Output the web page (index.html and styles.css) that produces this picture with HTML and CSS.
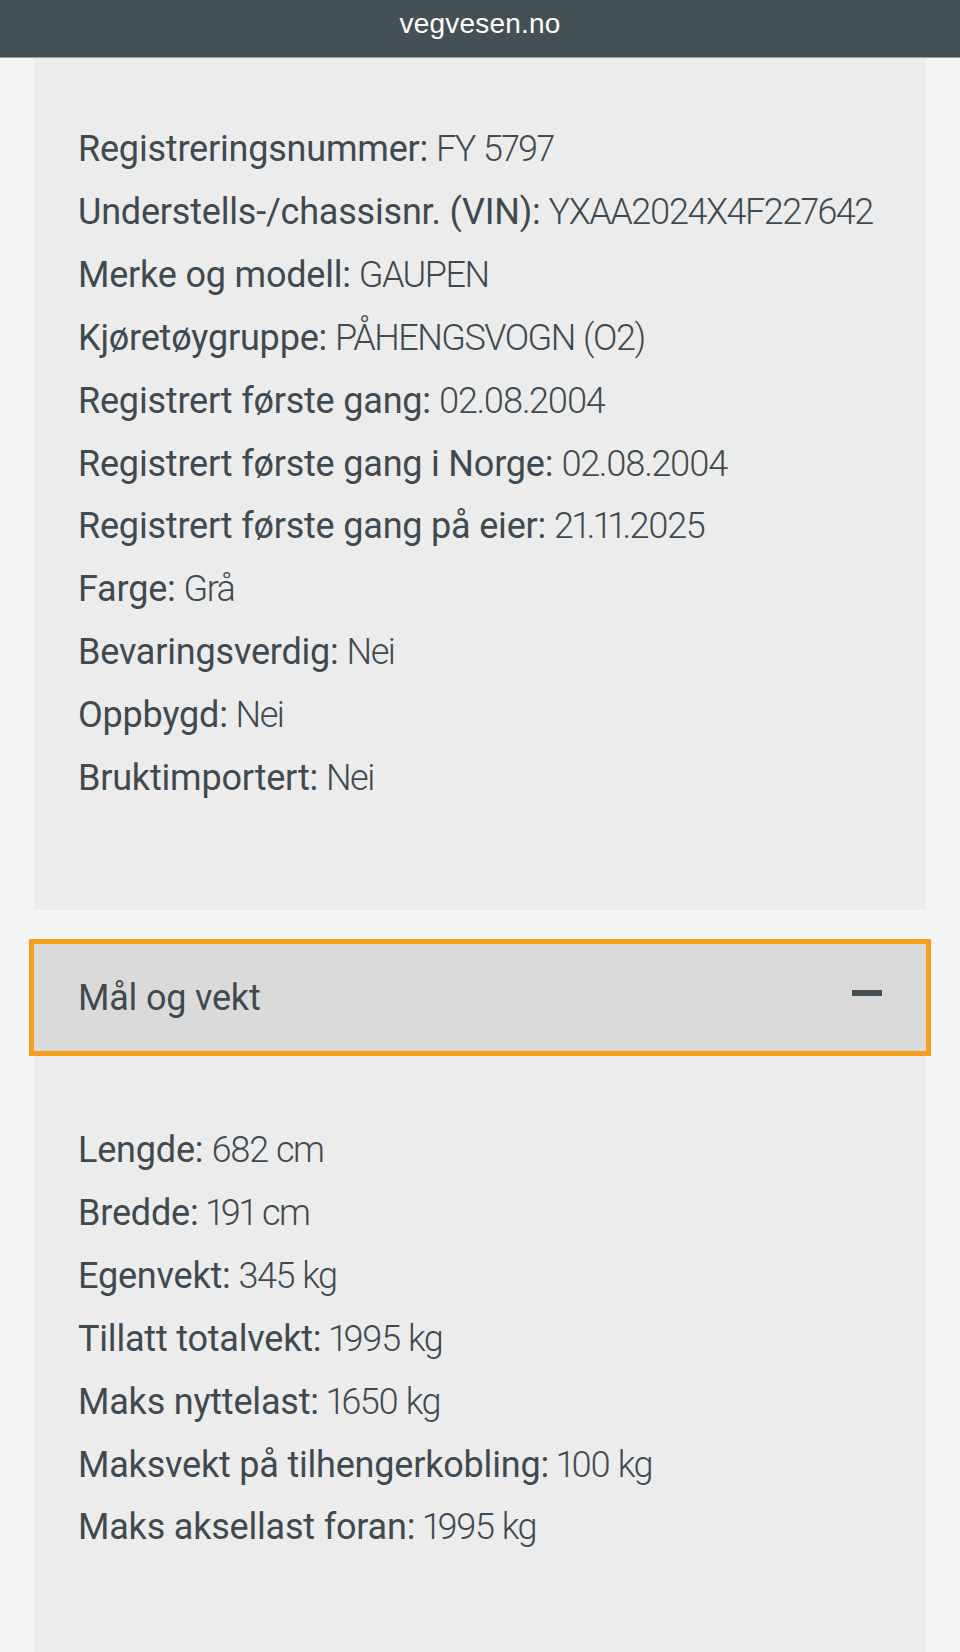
FILE: index.html
```html
<!DOCTYPE html>
<html lang="no">
<head>
<meta charset="utf-8">
<title>vegvesen.no</title>
<link rel="stylesheet" href="styles.css">
</head>
<body>
<header class="topbar"><span class="url">vegvesen.no</span></header>
<main class="content">
  <section class="card card-first">
    <div class="row"><span class="label">Registreringsnummer:</span> <span class="value">FY 5797</span></div>
    <div class="row"><span class="label">Understells-/chassisnr. (VIN):</span> <span class="value">YXAA2024X4F227642</span></div>
    <div class="row"><span class="label">Merke og modell:</span> <span class="value">GAUPEN</span></div>
    <div class="row"><span class="label">Kjøretøygruppe:</span> <span class="value">PÅHENGSVOGN (O2)</span></div>
    <div class="row"><span class="label">Registrert første gang:</span> <span class="value">02.08.2004</span></div>
    <div class="row"><span class="label">Registrert første gang i Norge:</span> <span class="value">02.08.2004</span></div>
    <div class="row"><span class="label">Registrert første gang på eier:</span> <span class="value">21.11.2025</span></div>
    <div class="row"><span class="label">Farge:</span> <span class="value">Grå</span></div>
    <div class="row"><span class="label">Bevaringsverdig:</span> <span class="value">Nei</span></div>
    <div class="row"><span class="label">Oppbygd:</span> <span class="value">Nei</span></div>
    <div class="row"><span class="label">Bruktimportert:</span> <span class="value">Nei</span></div>
  </section>
  <section class="accordion">
    <button class="acc-head" type="button">
      <span class="acc-title">Mål og vekt</span>
      <span class="acc-icon"></span>
    </button>
    <div class="card acc-panel">
      <div class="row"><span class="label">Lengde:</span> <span class="value">682 cm</span></div>
      <div class="row"><span class="label">Bredde:</span> <span class="value">191 cm</span></div>
      <div class="row"><span class="label">Egenvekt:</span> <span class="value">345 kg</span></div>
      <div class="row"><span class="label">Tillatt totalvekt:</span> <span class="value">1995 kg</span></div>
      <div class="row"><span class="label">Maks nyttelast:</span> <span class="value">1650 kg</span></div>
      <div class="row"><span class="label">Maksvekt på tilhengerkobling:</span> <span class="value">100 kg</span></div>
      <div class="row"><span class="label">Maks aksellast foran:</span> <span class="value">1995 kg</span></div>
    </div>
  </section>
</main>
</body>
</html>
```
FILE: styles.css
```css
html, body {
  margin: 0;
  padding: 0;
}
body {
  background: #f5f5f5;
  font-family: Roboto, "Noto Sans", sans-serif;
  color: #3f4a50;
  height: 1652px;
  overflow: hidden;
}
.topbar {
  height: 57px;
  background: #454f56;
  display: flex;
  align-items: center;
  justify-content: center;
  box-shadow: 0 1px 0 #9aa0a4;
  position: relative;
  z-index: 1;
}
.url {
  font-family: "Liberation Sans", Arial, sans-serif;
  font-size: 28px;
  color: #ffffff;
  letter-spacing: 0.2px;
  margin-top: -10px;
}
.content {
  padding: 0 34px;
}
.card {
  background: #ececec;
  padding: 0 46px 0 44px;
}
.card-first {
  padding-top: 61px;
  padding-bottom: 100px;
}
.row {
  font-size: 36px;
  line-height: 62.9px;
  white-space: nowrap;
  word-spacing: -1px;
}
.label {
  font-weight: 400;
  letter-spacing: -0.2px;
  word-spacing: 0;
}
.value {
  font-weight: 300;
  letter-spacing: -1.5px;
  word-spacing: 1px;
  font-variant-numeric: proportional-nums;
}
.accordion {
  margin-top: 34px;
}
.acc-head {
  display: flex;
  align-items: center;
  justify-content: space-between;
  width: 100%;
  height: 107px;
  margin: 0;
  border: 0;
  padding: 0 44px 0 44px;
  background: #dadada;
  outline: 5px solid #f89d1c;
  font-family: Roboto, "Noto Sans", sans-serif;
  font-size: 36px;
  font-weight: 400;
  color: #3f4a50;
  text-align: left;
  position: relative;
  z-index: 1;
}
.acc-title {
  margin-top: 1px;
  letter-spacing: -0.2px;
}
.acc-icon {
  width: 30px;
  height: 6px;
  background: #444f56;
  margin-top: -9px;
}
.acc-panel {
  padding-top: 68px;
  height: 700px;
}
```
